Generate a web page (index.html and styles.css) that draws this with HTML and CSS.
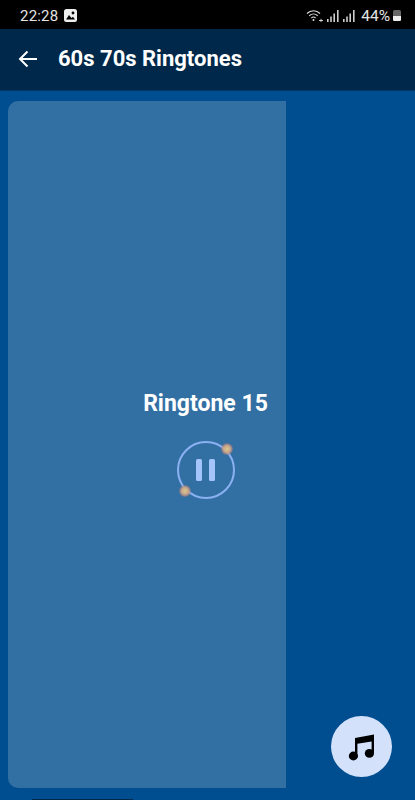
FILE: index.html
```html
<!DOCTYPE html>
<html>
<head>
    <title>60s 70s Ringtones</title>
    <link rel="stylesheet" href="styles.css">
</head>
<body>
    <div class="statusbar">
        <div class="status-left">
            <span class="clock">22:28</span>
            <svg class="pic-icon" width="13" height="13" viewBox="0 0 13 13">
                <rect x="0" y="0" width="13" height="13" rx="2.5" fill="#eee"/>
                <circle cx="9" cy="4" r="1.4" fill="#000"/>
                <path d="M2 10.5 L5 6 L7.5 9 L9 7.8 L11 10.5 Z" fill="#000"/>
            </svg>
        </div>
        <div class="status-right">
            <svg class="wifi-icon" width="17" height="14" viewBox="0 0 17 14" fill="none" stroke="#ddd" stroke-width="1.1">
                <path d="M1 4.5 C4.5 0.8 10.5 0.8 14 4.5"/>
                <path d="M3.2 6.8 C5.7 4.4 9.3 4.4 11.8 6.8"/>
                <path d="M5.4 9 C6.7 7.8 8.3 7.8 9.6 9"/>
                <circle cx="7.5" cy="11" r="1" fill="#ddd" stroke="none"/>
                <path d="M13 11.5 H17 M15 9.8 V13" stroke-width="0.9"/>
            </svg>
            <svg class="signal-icon" width="13" height="12" viewBox="0 0 13 12" fill="#ccc">
                <rect x="0" y="9" width="1.6" height="3"/>
                <rect x="3.2" y="6.5" width="1.6" height="5.5"/>
                <rect x="6.4" y="3.5" width="1.6" height="8.5"/>
                <rect x="10" y="0" width="1.6" height="12"/>
            </svg>
            <svg class="signal-icon" width="13" height="12" viewBox="0 0 13 12" fill="#ccc">
                <rect x="0" y="9" width="1.6" height="3"/>
                <rect x="3.2" y="6.5" width="1.6" height="5.5"/>
                <rect x="6.4" y="3.5" width="1.6" height="8.5"/>
                <rect x="10" y="0" width="1.6" height="12"/>
            </svg>
            <span class="battery-text">44%</span>
            <div class="battery"><div class="battery-fill"></div></div>
        </div>
    </div>

    <div class="appbar">
        <svg class="back-icon" width="20" height="18" viewBox="0 0 20 18" fill="none" stroke="#fff" stroke-width="2">
            <path d="M19 9 H2 M9.5 1.5 L2 9 L9.5 16.5"/>
        </svg>
        <h1>60s 70s Ringtones</h1>
    </div>

    <div class="content">
        <div class="player-card">
            <div class="progress"></div>
            <div class="player">
                <div class="track-name">Ringtone 15</div>
                <div class="pause-btn">
                    <span class="glint glint-top"></span>
                    <span class="glint glint-bottom"></span>
                    <span class="pause-bar"></span>
                    <span class="pause-bar"></span>
                </div>
            </div>
        </div>
        <div class="fab">
            <svg width="30" height="30" viewBox="0 0 30 30" fill="#000">
                <path d="M8 6 L27 2.6 V21 H24.6 V9.4 L10.4 11.8 V24 H8 Z"/>
                <ellipse cx="6.4" cy="24" rx="4.6" ry="4.4"/>
                <ellipse cx="22.4" cy="21.4" rx="4.6" ry="4.4"/>
            </svg>
        </div>
        <div class="nav-line"></div>
    </div>
</body>
</html>
```

FILE: styles.css
```css
* { margin: 0; padding: 0; box-sizing: border-box; }
body { font-family: Roboto, 'Liberation Sans', sans-serif; background: #004e8f; width: 415px; height: 800px; overflow: hidden; display: flex; flex-direction: column; }

.statusbar { height: 29px; background: #000; color: #e4e4e4; display: flex; justify-content: space-between; align-items: center; padding: 2px 14px 0 20px; flex-shrink: 0; }
.status-left { display: flex; align-items: center; gap: 6px; }
.clock { font-size: 15px; letter-spacing: 0.2px; }
.status-right { display: flex; align-items: center; gap: 3px; }
.wifi-icon { margin-right: 1px; }
.battery-text { font-size: 15.5px; margin-left: 2px; }
.battery { width: 8px; height: 11px; background: #666; border-radius: 1.5px; display: flex; align-items: flex-end; }
.battery-fill { width: 100%; height: 5px; background: #eee; border-radius: 0 0 1.5px 1.5px; }

.appbar { height: 62px; background: #00284a; display: flex; align-items: center; padding: 0 0 2px 18px; flex-shrink: 0; border-bottom: 1px solid #003767; }
.back-icon { margin-right: 20px; }
.appbar h1 { color: #fff; font-size: 22px; font-weight: 700; letter-spacing: 0; }

.content { position: relative; flex: 1; padding: 10px 8px 12px; }
.player-card { position: relative; height: 100%; display: flex; align-items: center; justify-content: center; }
.progress { position: absolute; left: 0; top: 0; bottom: 0; width: 278px; background: #326fa3; border-radius: 10px 0 0 10px; }
.player { position: relative; display: flex; flex-direction: column; align-items: center; gap: 24px; margin: 0 4px 0 0; }
.track-name { color: #fff; font-size: 23px; font-weight: 700; line-height: 27px; }

.pause-btn { position: relative; width: 58px; height: 58px; border: 2.5px solid #8bb1f3; border-radius: 50%; display: flex; align-items: center; justify-content: center; gap: 7px; }
.pause-bar { width: 6px; height: 22px; background: #a5c4fb; border-radius: 1.5px; }
.glint { position: absolute; width: 12px; height: 12px; border-radius: 50%; background: radial-gradient(circle, #d8c98e 0%, #c8a58a 40%, rgba(170,110,120,0.4) 70%, rgba(170,110,120,0) 100%); }
.glint-top { top: 0; right: 0; }
.glint-bottom { bottom: 0; left: 0; }

.fab { position: absolute; right: 23px; bottom: 23px; width: 61px; height: 61px; background: #d3e1fb; border-radius: 50%; display: flex; align-items: center; justify-content: center; }
.nav-line { position: absolute; left: 32px; bottom: 0; width: 101px; height: 1px; background: #00284a; }
```
